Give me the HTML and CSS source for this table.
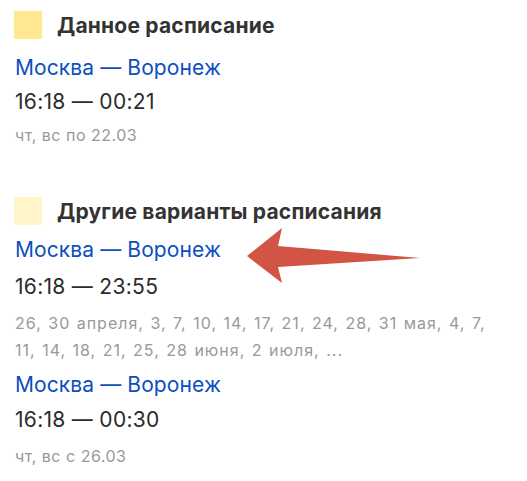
FILE: index.html
```html
<!DOCTYPE html>
<html lang="ru">
<head>
<meta charset="utf-8">
<link rel="stylesheet" href="styles.css">
</head>
<body>
<div class="page">
  <section class="block">
    <div class="head"><span class="sq sq1"></span><h2>Данное расписание</h2></div>
    <a class="route r1" href="#">Москва — Воронеж</a>
    <div class="time t1">16:18 — 00:21</div>
    <div class="days d1">чт, вс по 22.03</div>
  </section>
  <section class="block second">
    <div class="head"><span class="sq sq2"></span><h2>Другие варианты расписания</h2></div>
    <a class="route r2" href="#">Москва — Воронеж</a>
    <div class="time t2">16:18 — 23:55</div>
    <div class="days dates">26, 30 апреля, 3, 7, 10, 14, 17, 21, 24, 28, 31 мая, 4, 7, 11, 14, 18, 21, 25, 28 июня, 2 июля, ...</div>
    <a class="route r3" href="#">Москва — Воронеж</a>
    <div class="time t3">16:18 — 00:30</div>
    <div class="days d3">чт, вс с 26.03</div>
  </section>
  <svg class="arrow" width="527" height="481" viewBox="0 0 527 481"><path d="M247 256 L282 228 L278 246 L420 258 L278 267 L282 283 Z" fill="#d15444"/></svg>
</div>
</body>
</html>
```
FILE: styles.css
```css
html, body { margin: 0; padding: 0; background: #fff; }
body { font-family: Inter, Roboto, "Noto Sans", sans-serif; color: #222; }
.page { position: relative; padding: 11px 15px 0 14px; display: flex; flex-direction: column; height: 470px; }
.block { display: flex; flex-direction: column; align-items: flex-start; }
.second { margin-top: 47px; }
.head { display: flex; align-items: center; gap: 15px; height: 28px; }
.sq { width: 28px; height: 28px; flex: none; }
.sq1 { background: #ffe891; }
.sq2 { background: #fff5c8; }
h2 { margin: 0; font-size: 21px; font-weight: 700; color: #333; letter-spacing: 0.2px; }
.route { color: #0b4fc0; text-decoration: none; font-size: 21px; line-height: 34px; padding-left: 1px; letter-spacing: 0.1px; }
.time { font-size: 21px; line-height: 34px; padding-left: 1px; letter-spacing: 0.3px; color: #2b2b2b; }
.days { color: #999; font-size: 16px; line-height: 30px; padding-left: 1px; letter-spacing: 0.5px; }
.r1 { margin-top: 12px; }
.d1 { margin-top: 1px; }
.r2 { margin-top: 8px; }
.t2 { margin-top: 3px; }
.dates { width: 490px; line-height: 27px; margin-top: 6px; letter-spacing: 1px; word-spacing: 1px; }
.r3 { margin-top: 4px; }
.t3 { margin-top: 1px; }
.d3 { margin-top: 4px; }
.arrow { position: absolute; left: 0; top: 0; pointer-events: none; }
```
